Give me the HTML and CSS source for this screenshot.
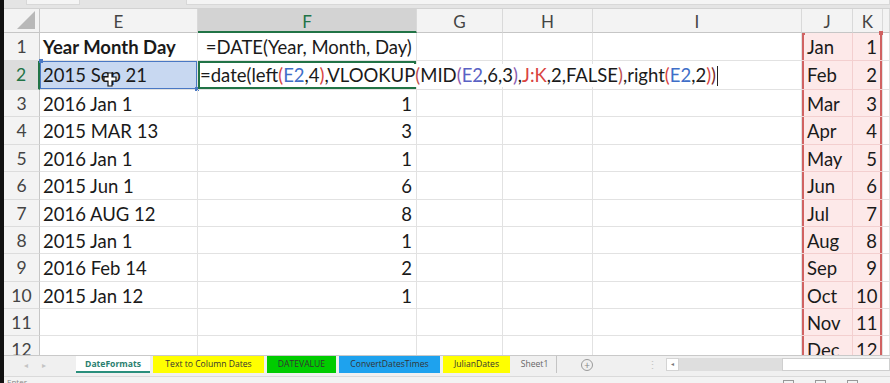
FILE: index.html
```html
<!DOCTYPE html>
<html lang="en">
  <head>
    <meta charset="UTF-8" />
    <title>DateFormats</title>
    <link rel="stylesheet" href="styles.css">
  </head>
  <body>
    <div class="edge"></div>
    <div class="main">
      <div class="fbar">
        <div class="fbox name"></div>
        <div class="fbox formula"></div>
      </div>
      <div class="sheet">
        <!-- column headers -->
        <div class="ch corner"><div class="tri"></div></div>
        <div class="ch">E</div>
        <div class="ch sel">F</div>
        <div class="ch">G</div>
        <div class="ch">H</div>
        <div class="ch">I</div>
        <div class="ch">J</div>
        <div class="ch">K</div>
        <div class="ch"></div>

        <div class="rh">1</div>
        <div class="c bold">Year Month Day</div>
        <div class="c">&nbsp;=DATE(Year, Month, Day)</div>
        <div class="c"></div><div class="c"></div><div class="c"></div>
        <div class="c jk jl top-l">Jan</div><div class="c jk jr num top-r">1</div><div class="c"></div>

        <div class="rh rsel">2</div>
        <div class="c ref">2015 Sep 21</div>
        <div class="c edit"><span class="ftext">=date<span class="k">(</span>left<span class="r">(</span><span class="b">E2</span>,4<span class="r">)</span>,VLOOKUP<span class="r2">(</span>MID<span class="pu">(</span><span class="b2">E2</span>,6,3<span class="pu">)</span>,<span class="r">J:K</span>,2,FALSE<span class="r2">)</span>,right<span class="r">(</span><span class="b">E2</span>,2<span class="r">)</span><span class="dk">)</span><span class="caret"></span></span></div>
        <div class="c"></div><div class="c"></div><div class="c"></div>
        <div class="c jk jl">Feb</div><div class="c jk jr num">2</div><div class="c"></div>

        <div class="rh">3</div>
        <div class="c">2016 Jan 1</div><div class="c num">1</div>
        <div class="c"></div><div class="c"></div><div class="c"></div>
        <div class="c jk jl">Mar</div><div class="c jk jr num">3</div><div class="c"></div>

        <div class="rh">4</div>
        <div class="c">2015 MAR 13</div><div class="c num">3</div>
        <div class="c"></div><div class="c"></div><div class="c"></div>
        <div class="c jk jl">Apr</div><div class="c jk jr num">4</div><div class="c"></div>

        <div class="rh">5</div>
        <div class="c">2016 Jan 1</div><div class="c num">1</div>
        <div class="c"></div><div class="c"></div><div class="c"></div>
        <div class="c jk jl">May</div><div class="c jk jr num">5</div><div class="c"></div>

        <div class="rh">6</div>
        <div class="c">2015 Jun 1</div><div class="c num">6</div>
        <div class="c"></div><div class="c"></div><div class="c"></div>
        <div class="c jk jl">Jun</div><div class="c jk jr num">6</div><div class="c"></div>

        <div class="rh">7</div>
        <div class="c">2016 AUG 12</div><div class="c num">8</div>
        <div class="c"></div><div class="c"></div><div class="c"></div>
        <div class="c jk jl">Jul</div><div class="c jk jr num">7</div><div class="c"></div>

        <div class="rh">8</div>
        <div class="c">2015 Jan 1</div><div class="c num">1</div>
        <div class="c"></div><div class="c"></div><div class="c"></div>
        <div class="c jk jl">Aug</div><div class="c jk jr num">8</div><div class="c"></div>

        <div class="rh">9</div>
        <div class="c">2016 Feb 14</div><div class="c num">2</div>
        <div class="c"></div><div class="c"></div><div class="c"></div>
        <div class="c jk jl">Sep</div><div class="c jk jr num">9</div><div class="c"></div>

        <div class="rh">10</div>
        <div class="c">2015 Jan 12</div><div class="c num">1</div>
        <div class="c"></div><div class="c"></div><div class="c"></div>
        <div class="c jk jl">Oct</div><div class="c jk jr num">10</div><div class="c"></div>

        <div class="rh">11</div>
        <div class="c"></div><div class="c"></div>
        <div class="c"></div><div class="c"></div><div class="c"></div>
        <div class="c jk jl">Nov</div><div class="c jk jr num">11</div><div class="c"></div>

        <div class="rh">12</div>
        <div class="c"></div><div class="c"></div>
        <div class="c"></div><div class="c"></div><div class="c"></div>
        <div class="c jk jl">Dec</div><div class="c jk jr num">12</div><div class="c"></div>
      </div>

      <div class="tabbar">
        <div class="nav"><span>&#9666;</span><span>&#9656;</span></div>
        <div class="tab active">DateFormats</div>
        <div class="tab yellow w-ttc">Text to Column Dates</div>
        <div class="tab green w-dv">DATEVALUE</div>
        <div class="tab blue w-cdt">ConvertDatesTimes</div>
        <div class="tab yellow w-jd">JulianDates</div>
        <div class="tab plain">Sheet1</div>
        <div class="addsheet">+</div>
        <div class="dots">&#8942;</div>
        <div class="hscroll">
          <div class="sbtn">&#9666;</div>
          <div class="track"></div>
          <div class="thumb"></div>
        </div>
      </div>
      <div class="status">
        <span class="mode">Enter</span>
        <div class="views">
          <span class="vicon"></span><span class="vicon"></span><span class="vicon"></span>
        </div>
      </div>
    </div>

    <svg class="mouse" width="14" height="15" viewBox="0 0 14 15">
      <path d="M5 1h4v4h4v4H9v5H5V9H1V5h4z" fill="#fff" stroke="#111" stroke-width="1.2"/>
    </svg>
  </body>
</html>
```

FILE: styles.css
```css
body {
  margin: 0;
  width: 890px;
  height: 383px;
  overflow: hidden;
  display: flex;
  background: #fff;
  font-family: Lato, "Open Sans", sans-serif;
  color: #1a1a1a;
  position: relative;
}
.edge {
  width: 4px;
  background: #111;
  flex: none;
}
.main {
  flex: 1;
  display: flex;
  flex-direction: column;
  min-width: 0;
}
.fbar {
  height: 9px;
  box-sizing: border-box;
  background: #e4e4e4;
  border-bottom: 1px solid #d2d2d2;
  display: flex;
  gap: 6px;
  padding-left: 22px;
}
.fbox {
  height: 4px;
  background: #f4f4f4;
  border: 1px solid #d8d8d8;
  border-top: none;
}
.fbox.name {
  width: 52px;
}
.fbox.formula {
  flex: 1;
  margin-left: 100px;
}

/* grid */
.sheet {
  display: grid;
  grid-template-columns: 36px 158px 219px 86px 90px 209px 51px 30px 1fr;
  grid-template-rows: 24px 28px 29px repeat(8, 27.4px) 27px 1fr;
  height: 346px;
  overflow: hidden;
  flex: none;
}
.ch,
.rh,
.c {
  box-sizing: border-box;
  white-space: nowrap;
  font-size: 18.5px;
  position: relative;
}
.ch {
  background: #f3f3f3;
  border-right: 1px solid #d9d9d9;
  border-bottom: 1px solid #c6c6c6;
  color: #444;
  text-align: center;
  font-size: 17px;
  line-height: 25px;
}
.ch.sel {
  background: #d3d3d3;
  color: #217346;
  border-bottom: 2px solid #217346;
}
.corner {
  border-right-color: #c6c6c6;
}
.tri {
  position: absolute;
  right: 4px;
  bottom: 3px;
  width: 18px;
  height: 18px;
  background: #b8b8b8;
  clip-path: polygon(100% 0, 100% 100%, 0 100%);
}
.rh {
  background: #f3f3f3;
  border-right: 1px solid #c6c6c6;
  border-bottom: 1px solid #dcdcdc;
  color: #444;
  text-align: center;
  font-size: 17.5px;
  line-height: 28px;
}
.rh.rsel {
  background: #dcdcdc;
  color: #217346;
  border-right: 2px solid #217346;
}
.c {
  border-right: 1px solid #e2e2e2;
  border-bottom: 1px solid #e2e2e2;
  padding: 0 3px;
  line-height: 28px;
  overflow: hidden;
}
.c.num {
  text-align: right;
  padding-right: 4px;
}
.c.bold {
  font-weight: bold;
}

/* E2 referenced cell */
.c.ref {
  background: #c8d8f1;
  box-shadow: inset 0 0 0 1px #4a78c4;
  overflow: visible;
}
.c.ref::before,
.c.ref::after {
  content: "";
  position: absolute;
  width: 4px;
  height: 4px;
  background: #4a78c4;
}
.c.ref::before {
  left: -1px;
  top: -2px;
}
.c.ref::after {
  right: -2px;
  bottom: -2px;
}

/* F2 edit cell */
.c.edit {
  box-shadow: inset 0 0 0 2px #217346;
  overflow: visible;
  z-index: 2;
  padding-left: 2px;
}
.ftext {
  display: inline-block;
  background: #fff;
  line-height: 23px;
  vertical-align: top;
  margin-top: 3px;
  padding-right: 4px;
}
.caret {
  display: inline-block;
  width: 1px;
  height: 20px;
  background: #222;
  vertical-align: -4px;
  margin-left: 1px;
}
.k { color: #1a1a1a; }
.r { color: #d9433f; }
.r2 { color: #c0504d; }
.dk { color: #7a2a2a; }
.b { color: #3f6fc8; }
.b2 { color: #5a62c4; }
.pu { color: #8a5cb0; }

/* J:K range highlight */
.c.jk {
  background: #fde9e9;
  border-right-color: #f3cfcf;
  border-bottom-color: #f3cfcf;
}
.c.jl {
  box-shadow: inset 2px 0 0 #d06262;
  padding-left: 5px;
}
.c.jr {
  box-shadow: inset -2px 0 0 #d06262;
  padding-right: 5px;
  border-right-color: #e2e2e2;
  overflow: visible;
}
.c.top-l::before,
.c.top-r::after {
  content: "";
  position: absolute;
  top: -2px;
  width: 4px;
  height: 4px;
  background: #d06262;
}
.c.top-l::before {
  left: -1px;
}
.c.top-r::after {
  right: -1px;
}

/* sheet tabs */
.tabbar {
  height: 21px;
  flex: none;
  box-sizing: border-box;
  background: #f0f0f0;
  border-top: 1px solid #c9c9c9;
  display: flex;
  align-items: flex-start;
  font-family: "Open Sans", sans-serif;
  font-size: 8.6px;
  color: #333;
}
.nav {
  width: 72px;
  display: flex;
  gap: 14px;
  padding-left: 20px;
  box-sizing: border-box;
  color: #c4c4c4;
  font-size: 8px;
  line-height: 17px;
}
.tab {
  height: 17px;
  line-height: 17px;
  text-align: center;
  margin-right: 3px;
  box-sizing: border-box;
}
.tab.active {
  width: 74px;
  background: #fff;
  color: #2a7f6f;
  font-weight: bold;
  border-bottom: 2px solid #2a8f7c;
  line-height: 16px;
}
.tab.yellow { background: #ffff00; }
.tab.green { background: #00cc00; }
.tab.blue { background: #1ea2ee; }
.w-ttc { width: 111px; }
.w-dv { width: 69px; }
.w-cdt { width: 101px; }
.w-jd { width: 67px; }
.tab.plain {
  width: 44px;
  color: #666;
  border-right: 1px solid #c4c4c4;
  margin-right: 0;
}
.addsheet {
  width: 10px;
  height: 10px;
  margin: 3px 0 0 24px;
  border: 1px solid #9a9a9a;
  border-radius: 50%;
  color: #888;
  font-size: 10px;
  line-height: 10px;
  text-align: center;
}
.dots {
  margin-left: 54px;
  color: #c4c4c4;
  font-size: 11px;
  line-height: 17px;
}
.hscroll {
  flex: 1;
  display: flex;
  margin: 2px 0 0 8px;
  height: 13px;
}
.sbtn {
  width: 11px;
  height: 11px;
  background: #fff;
  border: 1px solid #d4d4d4;
  font-size: 6px;
  line-height: 11px;
  text-align: center;
  color: #777;
}
.track {
  width: 103px;
  background: #dedede;
}
.thumb {
  flex: 1;
  background: #fff;
  border: 1px solid #cfcfcf;
  box-sizing: border-box;
}
.status {
  flex: 1;
  background: #f3f3f3;
  border-top: 1px solid #dadada;
  display: flex;
  overflow: hidden;
  font-family: "Open Sans", sans-serif;
  font-size: 8px;
  color: #888;
}
.mode {
  padding-left: 3px;
  line-height: 10px;
}
.views {
  margin-left: auto;
  margin-right: 32px;
  display: flex;
  gap: 21px;
  padding-top: 3px;
}
.vicon {
  width: 11px;
  height: 8px;
  border: 1px solid #999;
  box-sizing: border-box;
}

.mouse {
  position: absolute;
  left: 103px;
  top: 72px;
}
```
